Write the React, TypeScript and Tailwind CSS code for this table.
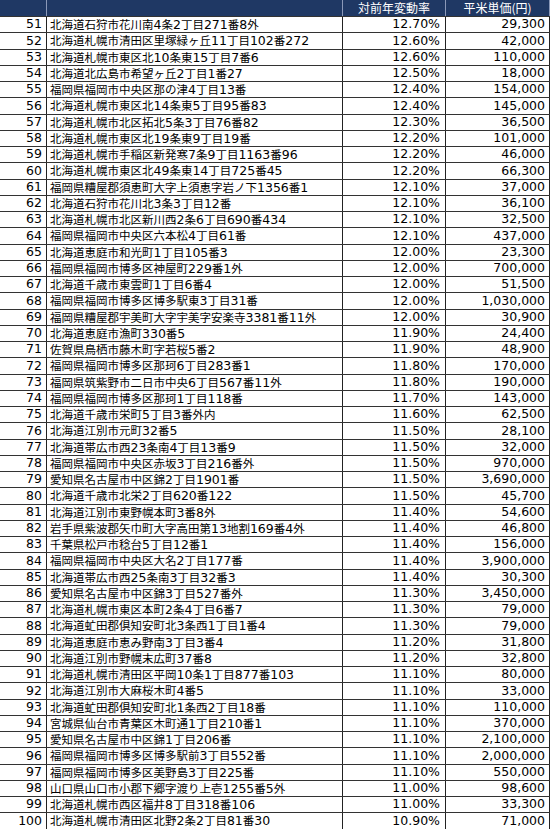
import React from "react";

const rows: [number, string, string, string][] = [
  [51, "北海道石狩市花川南4条2丁目271番8外", "12.70%", "29,300"],
  [52, "北海道札幌市清田区里塚緑ヶ丘11丁目102番272", "12.60%", "42,000"],
  [53, "北海道札幌市東区北10条東15丁目7番6", "12.60%", "110,000"],
  [54, "北海道北広島市希望ヶ丘2丁目1番27", "12.50%", "18,000"],
  [55, "福岡県福岡市中央区那の津4丁目13番", "12.40%", "154,000"],
  [56, "北海道札幌市東区北14条東5丁目95番83", "12.40%", "145,000"],
  [57, "北海道札幌市北区拓北5条3丁目76番82", "12.30%", "36,500"],
  [58, "北海道札幌市東区北19条東9丁目19番", "12.20%", "101,000"],
  [59, "北海道札幌市手稲区新発寒7条9丁目1163番96", "12.20%", "46,000"],
  [60, "北海道札幌市東区北49条東14丁目725番45", "12.20%", "66,300"],
  [61, "福岡県糟屋郡須恵町大字上須恵字岩ノ下1356番1", "12.10%", "37,000"],
  [62, "北海道石狩市花川北3条3丁目12番", "12.10%", "36,100"],
  [63, "北海道札幌市北区新川西2条6丁目690番434", "12.10%", "32,500"],
  [64, "福岡県福岡市中央区六本松4丁目61番", "12.10%", "437,000"],
  [65, "北海道恵庭市和光町1丁目105番3", "12.00%", "23,300"],
  [66, "福岡県福岡市博多区神屋町229番1外", "12.00%", "700,000"],
  [67, "北海道千歳市東雲町1丁目6番4", "12.00%", "51,500"],
  [68, "福岡県福岡市博多区博多駅東3丁目31番", "12.00%", "1,030,000"],
  [69, "福岡県糟屋郡宇美町大字宇美字安楽寺3381番11外", "12.00%", "30,900"],
  [70, "北海道恵庭市漁町330番5", "11.90%", "24,400"],
  [71, "佐賀県鳥栖市藤木町字若桜5番2", "11.90%", "48,900"],
  [72, "福岡県福岡市博多区那珂6丁目283番1", "11.80%", "170,000"],
  [73, "福岡県筑紫野市二日市中央6丁目567番11外", "11.80%", "190,000"],
  [74, "福岡県福岡市博多区那珂1丁目118番", "11.70%", "143,000"],
  [75, "北海道千歳市栄町5丁目3番外内", "11.60%", "62,500"],
  [76, "北海道江別市元町32番5", "11.50%", "28,100"],
  [77, "北海道帯広市西23条南4丁目13番9", "11.50%", "32,000"],
  [78, "福岡県福岡市中央区赤坂3丁目216番外", "11.50%", "970,000"],
  [79, "愛知県名古屋市中区錦2丁目1901番", "11.50%", "3,690,000"],
  [80, "北海道千歳市北栄2丁目620番122", "11.50%", "45,700"],
  [81, "北海道江別市東野幌本町3番8外", "11.40%", "54,600"],
  [82, "岩手県紫波郡矢巾町大字高田第13地割169番4外", "11.40%", "46,800"],
  [83, "千葉県松戸市稔台5丁目12番1", "11.40%", "156,000"],
  [84, "福岡県福岡市中央区大名2丁目177番", "11.40%", "3,900,000"],
  [85, "北海道帯広市西25条南3丁目32番3", "11.40%", "30,300"],
  [86, "愛知県名古屋市中区錦3丁目527番外", "11.30%", "3,450,000"],
  [87, "北海道札幌市東区本町2条4丁目6番7", "11.30%", "79,000"],
  [88, "北海道虻田郡倶知安町北3条西1丁目1番4", "11.30%", "79,000"],
  [89, "北海道恵庭市恵み野南3丁目3番4", "11.20%", "31,800"],
  [90, "北海道江別市野幌末広町37番8", "11.20%", "32,800"],
  [91, "北海道札幌市清田区平岡10条1丁目877番103", "11.10%", "80,000"],
  [92, "北海道江別市大麻桜木町4番5", "11.10%", "33,000"],
  [93, "北海道虻田郡倶知安町北1条西2丁目18番", "11.10%", "110,000"],
  [94, "宮城県仙台市青葉区木町通1丁目210番1", "11.10%", "370,000"],
  [95, "愛知県名古屋市中区錦1丁目206番", "11.10%", "2,100,000"],
  [96, "福岡県福岡市博多区博多駅前3丁目552番", "11.10%", "2,000,000"],
  [97, "福岡県福岡市博多区美野島3丁目225番", "11.10%", "550,000"],
  [98, "山口県山口市小郡下郷字渡り上壱1255番5外", "11.00%", "98,600"],
  [99, "北海道札幌市西区福井8丁目318番106", "11.00%", "33,300"],
  [100, "北海道札幌市清田区北野2条2丁目81番30", "10.90%", "71,000"],
];

function Addr({ text }: { text: string }) {
  const parts = text.split(/(\d+)/).filter((p) => p.length > 0);
  return (
    <>
      {parts.map((p, i) =>
        /^\d+$/.test(p) ? (
          <span key={i} className="text-[12.5px]">
            {p}
          </span>
        ) : (
          <span
            key={i}
            className="text-[11.5px]"
            style={{ fontFamily: '"Noto Sans CJK JP", sans-serif' }}
          >
            {p}
          </span>
        )
      )}
    </>
  );
}

export default function App() {
  return (
    <div
      className="w-[550px] h-[829px] bg-white text-black overflow-hidden"
      style={{ fontFamily: '"DejaVu Sans", "Noto Sans CJK JP", sans-serif' }}
    >
      <div
        className="grid grid-cols-[47px_296px_103px_104px] h-[16px] bg-[#1f3864] text-white text-[12px] leading-none"
        style={{ fontFamily: '"Noto Sans CJK JP", sans-serif' }}
      >
        <div className="border-r border-[#8a98b8]" />
        <div className="border-r border-[#8a98b8]" />
        <div className="border-r border-[#8a98b8] flex items-center justify-center">
          対前年変動率
        </div>
        <div className="border-r border-[#8a98b8] flex items-center justify-center">
          平米単価(円)
        </div>
      </div>
      {rows.map(([n, addr, rate, price]) => (
        <div
          key={n}
          className="grid grid-cols-[47px_296px_103px_104px] h-[16.25px] border-t border-[#333] leading-none"
        >
          <div className="border-r border-[#222] flex items-center justify-end pr-[4px] text-[12.5px]">
            {n}
          </div>
          <div className="border-r border-[#222] flex items-baseline self-stretch pt-[2px] pl-[3px] whitespace-nowrap overflow-hidden">
            <Addr text={addr} />
          </div>
          <div className="border-r border-[#222] flex items-center justify-end pr-[5px] text-[12.5px]">
            {rate}
          </div>
          <div className="border-r border-[#222] flex items-center justify-end pr-[4px] text-[12.5px]">
            {price}
          </div>
        </div>
      ))}
    </div>
  );
}
